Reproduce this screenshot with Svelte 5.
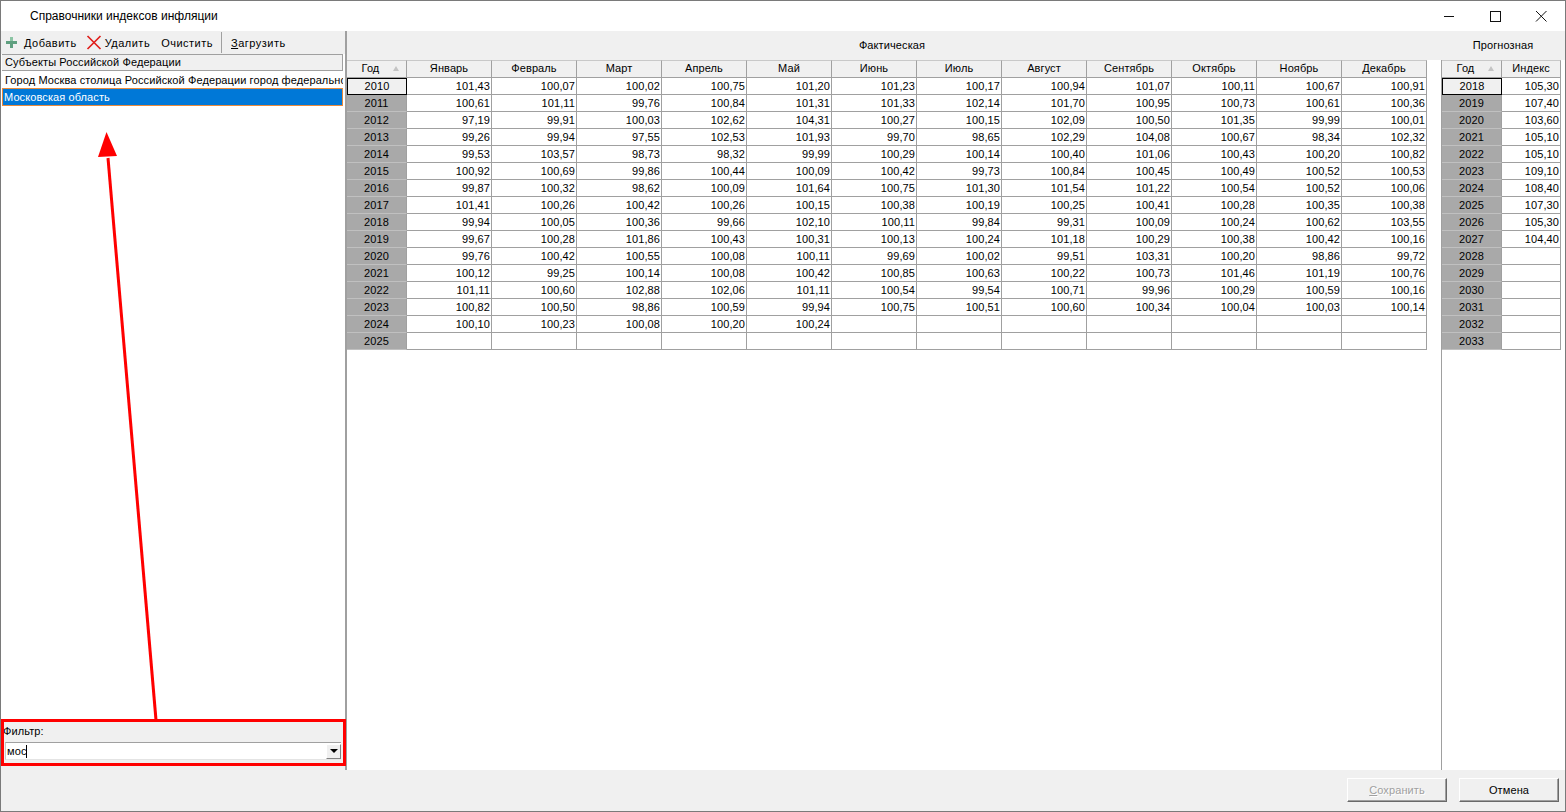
<script>
	const months = ['Январь', 'Февраль', 'Март', 'Апрель', 'Май', 'Июнь', 'Июль', 'Август', 'Сентябрь', 'Октябрь', 'Ноябрь', 'Декабрь'];

	const actual = [
		[2010, '101,43 100,07 100,02 100,75 101,20 101,23 100,17 100,94 101,07 100,11 100,67 100,91'],
		[2011, '100,61 101,11 99,76 100,84 101,31 101,33 102,14 101,70 100,95 100,73 100,61 100,36'],
		[2012, '97,19 99,91 100,03 102,62 104,31 100,27 100,15 102,09 100,50 101,35 99,99 100,01'],
		[2013, '99,26 99,94 97,55 102,53 101,93 99,70 98,65 102,29 104,08 100,67 98,34 102,32'],
		[2014, '99,53 103,57 98,73 98,32 99,99 100,29 100,14 100,40 101,06 100,43 100,20 100,82'],
		[2015, '100,92 100,69 99,86 100,44 100,09 100,42 99,73 100,84 100,45 100,49 100,52 100,53'],
		[2016, '99,87 100,32 98,62 100,09 101,64 100,75 101,30 101,54 101,22 100,54 100,52 100,06'],
		[2017, '101,41 100,26 100,42 100,26 100,15 100,38 100,19 100,25 100,41 100,28 100,35 100,38'],
		[2018, '99,94 100,05 100,36 99,66 102,10 100,11 99,84 99,31 100,09 100,24 100,62 103,55'],
		[2019, '99,67 100,28 101,86 100,43 100,31 100,13 100,24 101,18 100,29 100,38 100,42 100,16'],
		[2020, '99,76 100,42 100,55 100,08 100,11 99,69 100,02 99,51 103,31 100,20 98,86 99,72'],
		[2021, '100,12 99,25 100,14 100,08 100,42 100,85 100,63 100,22 100,73 101,46 101,19 100,76'],
		[2022, '101,11 100,60 102,88 102,06 101,11 100,54 99,54 100,71 99,96 100,29 100,59 100,16'],
		[2023, '100,82 100,50 98,86 100,59 99,94 100,75 100,51 100,60 100,34 100,04 100,03 100,14'],
		[2024, '100,10 100,23 100,08 100,20 100,24'],
		[2025, '']
	].map(([year, s]) => {
		const vals = s ? s.split(' ') : [];
		return { year, cells: months.map((_, i) => vals[i] ?? '') };
	});

	const forecast = [
		[2018, '105,30'], [2019, '107,40'], [2020, '103,60'], [2021, '105,10'], [2022, '105,10'], [2023, '109,10'],
		[2024, '108,40'], [2025, '107,30'], [2026, '105,30'], [2027, '104,40'], [2028, ''], [2029, ''],
		[2030, ''], [2031, ''], [2032, ''], [2033, '']
	];
</script>

<div class="window">
	<header class="titlebar">
		<span class="title">Справочники индексов инфляции</span>
		<div class="caption-btns">
			<svg width="46" height="30" viewBox="0 0 46 30"><path d="M18 15.500h10" stroke="#111" fill="none" /></svg>
			<svg width="46" height="30" viewBox="0 0 46 30"><rect x="18.500" y="10.500" width="10" height="10" stroke="#111" fill="none" /></svg>
			<svg width="46" height="30" viewBox="0 0 46 30"><path d="M18 10l10.500 10.500M28.500 10L18 20.500" stroke="#111" fill="none" /></svg>
		</div>
	</header>

	<div class="body">
		<aside class="left">
			<div class="toolbar">
				<button class="tool add">
					<svg width="13" height="13" viewBox="0 0 13 13">
						<path d="M5 1h3v4h4v3H8v4H5V8H1V5h4z" fill="#5f9f7f" />
						<path d="M5 1h3v4H5z" fill="#8cc4a4" />
					</svg>
					<span>Добавить</span>
				</button>
				<button class="tool del">
					<svg width="16" height="15" viewBox="0 0 16 15">
						<path d="M1.500 1l13 13M14.500 1l-13 13" stroke="#e0201c" stroke-width="1.700" fill="none" />
					</svg>
					<span>Удалить</span>
				</button>
				<button class="tool clear">Очистить</button>
				<span class="tool-sep"></span>
				<button class="tool load"><span><u>З</u>агрузить</span></button>
			</div>

			<div class="list">
				<div class="list-head">Субъекты Российской Федерации</div>
				<div class="list-row">Город Москва столица Российской Федерации город федерального значения</div>
				<div class="list-row selected">Московская область</div>
			</div>

			<div class="filter">
				<div class="filter-label">Фильтр:</div>
				<div class="combo">
					<span class="combo-text">мос</span>
					<span class="caret"></span>
					<span class="combo-btn"><i></i></span>
				</div>
			</div>
			<div class="left-foot"></div>
		</aside>

		<main class="right">
			<div class="panels">
				<section class="panel actual">
					<div class="panel-title">Фактическая</div>
					<div class="grid actual-grid">
						<div class="hcell sort">Год<span class="tri"></span></div>
						{#each months as m}
							<div class="hcell">{m}</div>
						{/each}
						{#each actual as row, i}
							<div class="year" class:current={i === 0}>{row.year}</div>
							{#each row.cells as c}
								<div class="cell">{c}</div>
							{/each}
						{/each}
					</div>
				</section>
				<section class="panel forecast">
					<div class="panel-title">Прогнозная</div>
					<div class="forecast-body">
						<div class="grid forecast-grid">
							<div class="hcell sort">Год<span class="tri"></span></div>
							<div class="hcell">Индекс</div>
							{#each forecast as row, i}
								<div class="year" class:current={i === 0}>{row[0]}</div>
								<div class="cell">{row[1]}</div>
							{/each}
						</div>
					</div>
				</section>
			</div>
			<footer class="footer">
				<button class="btn" disabled><u>С</u>охранить</button>
				<button class="btn">Отмена</button>
			</footer>
		</main>
	</div>

	<!-- red annotation over the screenshot -->
	<div class="mark"></div>
	<svg class="arrow" width="200" height="620" viewBox="0 0 200 620">
		<path d="M155 590L107 28" stroke="#f00" stroke-width="3" fill="none" />
		<path d="M105.500 2L97 27L116 26z" fill="#f00" />
	</svg>
</div>

<style>
	:global(body) {
		margin: 0;
		background: #fff;
	}

	.window {
		position: relative;
		width: 1566px;
		height: 812px;
		box-sizing: border-box;
		border: 1px solid #7a7a7a;
		display: flex;
		flex-direction: column;
		overflow: hidden;
		background: #fff;
		color: #000;
		font-family: 'Liberation Sans', Arial, sans-serif;
		font-size: 11px;
		letter-spacing: 0.1px;
	}

	.titlebar {
		height: 30px;
		flex: none;
		display: flex;
		align-items: center;
		justify-content: space-between;
		padding-left: 29px;
		font-size: 12px;
		letter-spacing: 0;
	}

	.caption-btns {
		display: flex;
		margin-right: 1px;
	}

	.caption-btns svg {
		display: block;
	}

	.body {
		flex: 1;
		display: flex;
		min-height: 0;
	}

	.left {
		width: 344px;
		flex: none;
		display: flex;
		flex-direction: column;
		background: #f0f0f0;
	}

	.toolbar {
		height: 22px;
		flex: none;
		display: flex;
		align-items: center;
		padding: 1px 0 0 4px;
		box-sizing: border-box;
		margin-bottom: 1px;
		letter-spacing: 0.5px;
	}

	.tool {
		display: flex;
		align-items: center;
		border: none;
		background: none;
		padding: 0;
		font: inherit;
		letter-spacing: inherit;
		color: inherit;
	}

	.tool.add {
		gap: 6px;
	}

	.tool.del {
		margin-left: 9px;
		gap: 3px;
	}

	.tool.clear {
		margin-left: 11px;
	}

	.tool-sep {
		width: 1px;
		height: 21px;
		margin: -1px 9px 0 8px;
		background: #a0a0a0;
	}

	.list {
		flex: 1;
		background: #fff;
		padding: 0 2px 0 1px;
		overflow: hidden;
	}

	.list-head {
		height: 17px;
		padding-left: 3px;
		box-sizing: border-box;
		background: #f0f0f0;
		border: 1px solid #a0a0a0;
		border-width: 1px 1px 1px 0;
		line-height: 15px;
		white-space: nowrap;
	}

	.list-row {
		height: 17px;
		line-height: 18px;
		padding-left: 3px;
		white-space: nowrap;
		overflow: hidden;
	}

	.list-row.selected {
		background: #0078d7;
		color: #fff;
		box-sizing: border-box;
		height: 18px;
		line-height: 16px;
		border: 1px solid #e98a3c;
		padding-left: 1px;
	}

	.filter {
		height: 47px;
		flex: none;
		box-sizing: border-box;
		padding: 5px 4px 0 4px;
		background: #f0f0f0;
	}

	.filter-label {
		height: 15px;
		line-height: 15px;
		margin-left: -2px;
	}

	.combo {
		margin-top: 3px;
		height: 18px;
		box-sizing: border-box;
		border-top: 1px solid #a0a0a0;
		border-left: 1px solid #c8c8c8;
		border-bottom: 1px solid #e4e4e4;
		background: #fff;
		display: flex;
		align-items: center;
		padding-left: 1px;
	}

	.caret {
		width: 1px;
		height: 13px;
		background: #000;
	}

	.combo-btn {
		margin-left: auto;
		width: 15px;
		height: 15px;
		box-sizing: border-box;
		background: #f0f0f0;
		border: 1px solid #fff;
		border-right-color: #808080;
		border-bottom-color: #808080;
		display: flex;
		align-items: center;
		justify-content: center;
	}

	.combo-btn i {
		width: 0;
		height: 0;
		border-left: 4px solid transparent;
		border-right: 4px solid transparent;
		border-top: 4px solid #000;
	}

	.left-foot {
		height: 45px;
		flex: none;
	}

	.right {
		flex: 1;
		min-width: 0;
		display: flex;
		flex-direction: column;
		border-left: 2px solid #a0a0a0;
	}

	.panels {
		flex: 1;
		display: flex;
		min-height: 0;
	}

	.panel {
		display: flex;
		flex-direction: column;
	}

	.panel.actual {
		width: 1094px;
	}

	.panel.forecast {
		flex: 1;
	}

	.panel-title {
		height: 29px;
		flex: none;
		background: #f0f0f0;
		text-align: center;
		line-height: 29px;
	}

	.actual .panel-title {
		padding-right: 4px;
	}

	.forecast-body {
		flex: 1;
		border-left: 1px solid #a0a0a0;
	}

	.grid {
		display: grid;
		grid-template-rows: 18px;
		grid-auto-rows: 17px;
	}

	.actual-grid {
		grid-template-columns: 60px repeat(12, 85px);
	}

	.forecast-grid {
		grid-template-columns: 60px 59px;
	}

	.hcell {
		position: relative;
		background: #f0f0f0;
		text-align: center;
		line-height: 15px;
		box-sizing: border-box;
		border-right: 1px solid #a0a0a0;
		border-bottom: 1px solid #a0a0a0;
		border-top: 1px solid #c8c8c8;
	}

	.hcell.sort {
		padding-right: 12px;
	}

	.tri {
		position: absolute;
		right: 7px;
		top: 5px;
		width: 0;
		height: 0;
		border-left: 3px solid transparent;
		border-right: 3px solid transparent;
		border-bottom: 5px solid #c4c4c4;
	}

	.year {
		background: #a9a9a9;
		text-align: center;
		line-height: 16px;
		box-sizing: border-box;
		border-right: 1px solid #a0a0a0;
		border-bottom: 1px solid #c0c0c0;
	}

	.year.current {
		background: #f0f0f0;
		border: 1px solid #000;
		line-height: 15px;
	}

	.cell {
		text-align: right;
		line-height: 16px;
		padding-right: 1px;
		box-sizing: border-box;
		border-right: 1px solid #a0a0a0;
		border-bottom: 1px solid #a0a0a0;
	}

	.footer {
		height: 41px;
		flex: none;
		margin-left: -2px;
		background: #f0f0f0;
		display: flex;
		justify-content: flex-end;
		align-items: flex-start;
		gap: 12px;
		padding: 8px 6px 0 0;
		box-sizing: border-box;
	}

	.btn {
		width: 100px;
		height: 24px;
		padding: 0;
		background: #f0f0f0;
		box-sizing: border-box;
		border: 1px solid #fff;
		border-right-color: #696969;
		border-bottom-color: #696969;
		box-shadow: inset -1px -1px 0 #a0a0a0;
		font: inherit;
		letter-spacing: inherit;
		color: #000;
	}

	.btn:disabled {
		color: #a0a0a0;
		text-shadow: 1px 1px 0 #fff;
	}

	.mark {
		position: absolute;
		left: 0;
		top: 718px;
		width: 345px;
		height: 47px;
		box-sizing: border-box;
		border: 3px solid #f00;
	}

	.arrow {
		position: absolute;
		left: 0;
		top: 129px;
	}
</style>
